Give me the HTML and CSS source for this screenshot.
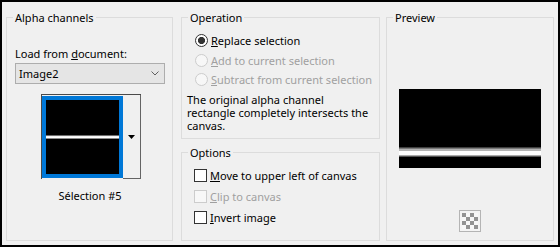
FILE: index.html
```html
<!DOCTYPE html>
<html lang="en">
<head>
  <meta charset="UTF-8">
  <meta name="viewport" content="width=device-width, initial-scale=1.0">
  <title>Alpha channels</title>
  <link rel="stylesheet" href="styles.css">
</head>
<body>
  <div class="dialog">
    <fieldset class="group group-alpha">
      <legend>Alpha channels</legend>
      <label class="field-label" for="doc">Load from <u>d</u>ocument:</label>
      <div class="select" id="doc">
        <span>Image2</span>
        <svg width="8" height="5" viewBox="0 0 8 5"><polyline points="0.5,0.5 4,4 7.5,0.5" fill="none" stroke="#606060" stroke-width="1"/></svg>
      </div>
      <div class="thumb">
        <div class="thumb-pick">
          <div class="thumb-image"></div>
        </div>
        <div class="thumb-drop">
          <svg width="7" height="4" viewBox="0 0 7 4"><polygon points="0,0 7,0 3.5,4" fill="#000"/></svg>
        </div>
      </div>
      <div class="caption">Sélection #5</div>
    </fieldset>

    <div class="column">
      <fieldset class="group group-operation">
        <legend>Operation</legend>
        <div class="choices">
          <div class="choice"><span class="radio checked"></span><span><u>R</u>eplace selection</span></div>
          <div class="choice disabled"><span class="radio"></span><span><u>A</u>dd to current selection</span></div>
          <div class="choice disabled"><span class="radio"></span><span><u>S</u>ubtract from current selection</span></div>
        </div>
        <p class="note">The original alpha channel<br>rectangle completely intersects the<br>canvas.</p>
      </fieldset>
      <fieldset class="group group-options">
        <legend>Options</legend>
        <div class="checks">
          <div class="check-row"><span class="checkbox"></span><span><u>M</u>ove to upper left of canvas</span></div>
          <div class="check-row disabled"><span class="checkbox"></span><span><u>C</u>lip to canvas</span></div>
          <div class="check-row"><span class="checkbox"></span><span><u>I</u>nvert image</span></div>
        </div>
      </fieldset>
    </div>

    <fieldset class="group group-preview">
      <legend>Preview</legend>
      <div class="preview"></div>
      <div class="checker"><div class="checker-grid"></div></div>
    </fieldset>
  </div>
</body>
</html>
```

FILE: styles.css
```css
body {
  margin: 0;
  font-family: "Noto Sans", "Liberation Sans", sans-serif;
  font-size: 11px;
  color: #000;
  background-color: #f0f0f0;
}

.dialog {
  width: 560px;
  height: 247px;
  box-sizing: border-box;
  border: 2px solid #000;
  padding: 8px 4px 4px 4px;
  display: flex;
  background-color: #f0f0f0;
}

.group {
  margin: 0;
  padding: 0 7px 0 8px;
  border: 1px solid #dcdcdc;
  min-width: 0;
  box-sizing: border-box;
}

.group legend {
  height: 15px;
  line-height: 15px;
  padding: 0 2px;
  margin-left: -2px;
}

u {
  text-decoration-thickness: 1px;
  text-underline-offset: 1px;
}

/* left column */
.group-alpha {
  width: 167px;
}

.field-label {
  display: block;
  margin-top: 21px;
  line-height: 15px;
}

.select {
  margin-top: 2px;
  width: 150px;
  height: 21px;
  box-sizing: border-box;
  border: 1px solid #adadad;
  background-color: #e5e5e5;
  display: flex;
  align-items: center;
  justify-content: space-between;
  padding: 0 5px 0 3px;
}

.thumb {
  display: flex;
  width: 100px;
  height: 85px;
  box-sizing: border-box;
  margin: 10px 0 0 26px;
  border-top: 1px solid #4a4a4a;
  border-left: 1px solid #4a4a4a;
}

.thumb-pick {
  width: 81px;
  padding-top: 1px;
}

.thumb-image {
  height: 74px;
  border: 4px solid #0078d7;
  background: linear-gradient(to bottom,
    #000 0, #000 35px,
    #6c6c6c 35px, #6c6c6c 36px,
    #e8e8e8 36px, #fff 37px, #fff 38px,
    #8a8a8a 38px, #8a8a8a 39px,
    #000 39px);
}

.thumb-drop {
  flex: 1;
  box-sizing: border-box;
  border-right: 1px solid #646464;
  border-bottom: 1px solid #646464;
  display: flex;
  align-items: center;
  justify-content: center;
}

.caption {
  margin-top: 9px;
  line-height: 15px;
  text-align: center;
}

/* middle column */
.column {
  width: 199px;
  margin-left: 8px;
  display: flex;
  flex-direction: column;
}

.group-operation {
  height: 129px;
}

.group-options {
  flex: 1;
  margin-top: 6px;
}

.choices {
  padding-top: 6px;
}

.choice {
  display: flex;
  align-items: center;
  height: 19.5px;
  padding-left: 5px;
}

.radio {
  width: 13px;
  height: 13px;
  box-sizing: border-box;
  border: 1px solid #333;
  border-radius: 50%;
  background-color: #fff;
  margin-right: 3px;
}

.radio.checked {
  background: radial-gradient(circle, #333 0, #333 3.2px, #fff 3.9px);
}

.disabled {
  color: #a0a0a0;
}

.disabled .radio,
.disabled .checkbox {
  border-color: #cccccc;
  background-color: #f7f7f7;
}

.note {
  margin: 3px 0 0 -3px;
  line-height: 13px;
}

.checks {
  padding-top: 5px;
}

.check-row {
  display: flex;
  align-items: center;
  height: 21px;
  padding-left: 4px;
}

.checkbox {
  width: 13px;
  height: 13px;
  box-sizing: border-box;
  border: 1px solid #333;
  background-color: #fff;
  margin-right: 3px;
}

/* right column */
.group-preview {
  width: 168px;
  margin-left: 6px;
}

.preview {
  width: 142px;
  height: 79px;
  margin: 64px 0 0 4px;
  background: linear-gradient(to bottom,
    #000 0, #000 58px,
    #404040 58px, #404040 59px,
    #7a7a7a 59px, #7a7a7a 60px,
    #b4b4b4 60px, #b4b4b4 62px,
    #fff 62px, #fff 66px,
    #aaaaaa 66px, #aaaaaa 67px,
    #555 67px, #555 68px,
    #000 68px);
}

.checker {
  width: 22px;
  height: 22px;
  box-sizing: border-box;
  margin: 42px 0 0 64px;
  border: 1px solid #b4b4b4;
  padding: 2px;
  background-color: #f4f4f4;
}

.checker-grid {
  width: 16px;
  height: 16px;
  background: repeating-conic-gradient(#f8f8f8 0 25%, #939393 0 50%) 0 0 / 8px 8px;
}
```
